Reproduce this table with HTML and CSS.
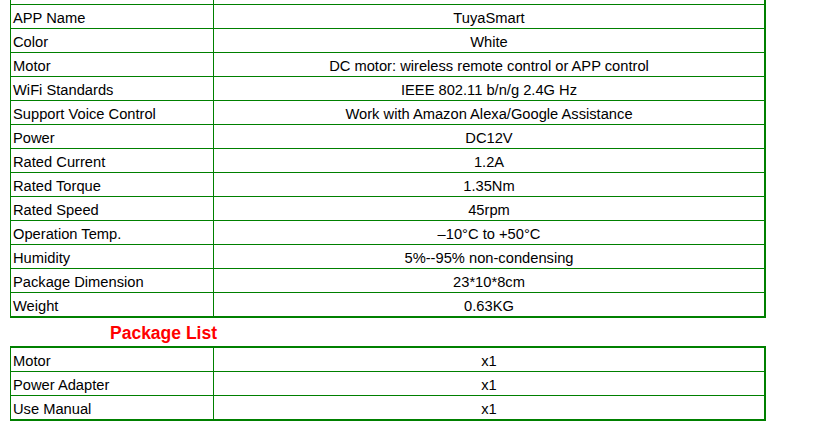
FILE: index.html
```html
<!DOCTYPE html>
<html>
<head>
<meta charset="utf-8">
<link rel="stylesheet" href="styles.css">
</head>
<body>
<div class="page">
  <table class="spec spec-main">
    <tr><td class="k">&nbsp;</td><td class="v">&nbsp;</td></tr>
    <tr><td class="k">APP Name</td><td class="v">TuyaSmart</td></tr>
    <tr><td class="k">Color</td><td class="v">White</td></tr>
    <tr><td class="k">Motor</td><td class="v">DC motor: wireless remote control or APP control</td></tr>
    <tr><td class="k">WiFi Standards</td><td class="v">IEEE 802.11 b/n/g 2.4G Hz</td></tr>
    <tr><td class="k">Support Voice Control</td><td class="v">Work with Amazon Alexa/Google Assistance</td></tr>
    <tr><td class="k">Power</td><td class="v">DC12V</td></tr>
    <tr><td class="k">Rated Current</td><td class="v">1.2A</td></tr>
    <tr><td class="k">Rated Torque</td><td class="v">1.35Nm</td></tr>
    <tr><td class="k">Rated Speed</td><td class="v">45rpm</td></tr>
    <tr><td class="k">Operation Temp.</td><td class="v">–10°C to +50°C</td></tr>
    <tr><td class="k">Humidity</td><td class="v">5%--95% non-condensing</td></tr>
    <tr><td class="k">Package Dimension</td><td class="v">23*10*8cm</td></tr>
    <tr class="last"><td class="k">Weight</td><td class="v">0.63KG</td></tr>
  </table>
  <div class="title">Package List</div>
  <table class="spec">
    <tr><td class="k">Motor</td><td class="v">x1</td></tr>
    <tr><td class="k">Power Adapter</td><td class="v">x1</td></tr>
    <tr class="last"><td class="k">Use Manual</td><td class="v">x1</td></tr>
  </table>
</div>
</body>
</html>
```
FILE: styles.css
```css
html, body {
  margin: 0;
  padding: 0;
  background: #ffffff;
}
.page {
  padding-left: 10px;
  font-family: "Liberation Sans", Arial, sans-serif;
  font-size: 14.7px;
  color: #000;
}
.spec {
  width: 756px;
  border-collapse: separate;
  border-spacing: 0;
  border-left: 1px solid #008000;
  border-top: 2px solid #008000;
  border-right: 2px solid #008000;
  border-bottom: 2px solid #008000;
  table-layout: fixed;
}
.spec-main {
  margin-top: -21px;
}
.spec td {
  height: 21px;
  padding: 2px 2px 0 2px;
  border-bottom: 1px solid #008000;
  line-height: 16px;
  vertical-align: middle;
  white-space: nowrap;
  box-sizing: content-box;
}
.spec tr.last td {
  border-bottom: none;
}
.spec td.k {
  width: 198px;
  border-right: 1px solid #008000;
  text-align: left;
}
.spec td.v {
  text-align: center;
}
.title {
  height: 26px;
  padding-top: 2px;
  padding-left: 100px;
  line-height: 26px;
  font-size: 17.5px;
  font-weight: bold;
  color: #ff0000;
}
```
